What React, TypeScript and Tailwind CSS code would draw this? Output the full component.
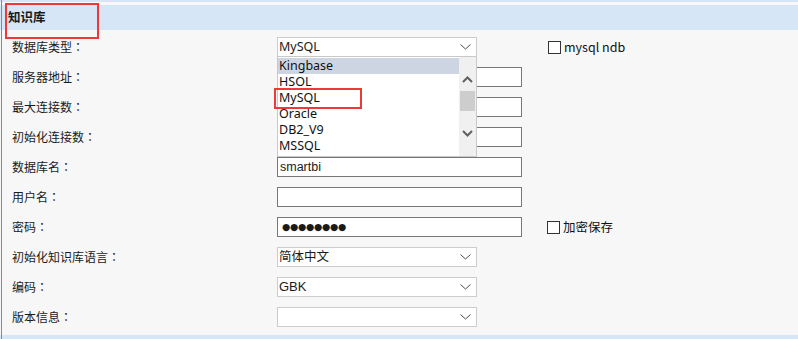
import React from 'react'

type Row = {
  label: string
  kind: 'select' | 'input'
  value?: string
  password?: boolean
  check?: string
}

const rows: Row[] = [
  { label: '数据库类型', kind: 'select', value: 'MySQL', check: 'mysql ndb' },
  { label: '服务器地址', kind: 'input' },
  { label: '最大连接数', kind: 'input' },
  { label: '初始化连接数', kind: 'input' },
  { label: '数据库名', kind: 'input', value: 'smartbi' },
  { label: '用户名', kind: 'input' },
  { label: '密码', kind: 'input', password: true, check: '加密保存' },
  { label: '初始化知识库语言', kind: 'select', value: '简体中文' },
  { label: '编码', kind: 'select', value: 'GBK' },
  { label: '版本信息', kind: 'select' },
]

const options = ['Kingbase', 'HSOL', 'MySQL', 'Oracle', 'DB2_V9', 'MSSQL']

const Chevron = () => (
  <svg width="11" height="6" viewBox="0 0 11 6" className="shrink-0">
    <path d="M0.5 0.5 L5.5 5 L10.5 0.5" fill="none" stroke="#4a4a4a" strokeWidth="1" />
  </svg>
)

const DropList = () => (
  <div className="absolute left-0 top-[19px] z-10 flex h-[101px] w-[200px] border border-[#c9c9c9] bg-white">
    <div className="flex-1 pt-px">
      {options.map((o, i) => (
        <div
          key={o}
          className={
            "h-4 pl-px text-[12.5px] leading-4 text-[#111] font-['Noto_Sans',sans-serif] " +
            (i === 0 ? 'bg-[#cdd5e3]' : '')
          }
        >
          {o}
        </div>
      ))}
    </div>
    <div className="flex w-[17px] flex-col items-center bg-[#f0f0f0]">
      <svg width="11" height="7" viewBox="0 0 11 7" className="mt-[19px]">
        <path d="M1 6 L5.5 1.5 L10 6" fill="none" stroke="#606060" strokeWidth="2" />
      </svg>
      <div className="mt-[8px] h-5 w-[15px] bg-[#cdcdcd]" />
      <svg width="11" height="7" viewBox="0 0 11 7" className="mt-[19px]">
        <path d="M1 1 L5.5 5.5 L10 1" fill="none" stroke="#606060" strokeWidth="2" />
      </svg>
    </div>
  </div>
)

const CheckBox = ({ text }: { text: string }) => (
  <div className="ml-[25px] flex items-center">
    <div className="h-[13px] w-[13px] border border-[#333] bg-white" />
    <span className="ml-[3px] text-[12.5px] text-[#111]">{text}</span>
  </div>
)

export default function App() {
  return (
    <div className="relative h-[339px] w-[798px] overflow-hidden bg-[#f7f7f7] font-['Noto_Sans_CJK_SC',sans-serif] text-[#1a1a1a]">
      <div className="absolute left-px top-0 h-full w-px bg-[#5f8fd4]" />
      <div className="h-[2px] bg-[#d6e6f6]" />
      <div className="h-[3px]" />
      <div className="flex h-[25px] items-center bg-[#d6e6f6] pl-2 text-[12.5px] font-bold">知识库</div>
      <div className="pt-[2px]">
        {rows.map((r, i) => (
          <div key={i} className="flex h-[30px] items-center">
            <div className="w-[277px] pl-3 text-[12px]">
              {r.label}
              <span className="font-['Noto_Sans_CJK_TC',sans-serif]">：</span>
            </div>
            {r.kind === 'select' ? (
              <div className="relative">
                <div className="flex h-5 w-[200px] items-center justify-between border border-[#cccccc] bg-white pl-px pr-[5px]">
                  <span
                    className={
                      r.value === 'GBK'
                        ? "text-[13px] font-['Liberation_Sans',sans-serif]"
                        : "text-[12.5px] font-['Noto_Sans','Noto_Sans_CJK_SC',sans-serif]"
                    }
                  >
                    {r.value ?? ''}
                  </span>
                  <Chevron />
                </div>
                {i === 0 && <DropList />}
              </div>
            ) : (
              <div className="flex h-5 w-[245px] items-center border border-[#777] bg-white pl-[2px] font-['Liberation_Sans',sans-serif] text-[12.5px]">
                {r.password ? (
                  <span className="pl-[2px] text-[9.5px] tracking-[-0.3px] font-['DejaVu_Sans',sans-serif]">●●●●●●●●</span>
                ) : (
                  r.value ?? ''
                )}
              </div>
            )}
            {r.check && <div className={r.kind === 'select' ? 'ml-[46px]' : ''}><CheckBox text={r.check} /></div>}
          </div>
        ))}
      </div>
      <div className="mt-[3px] h-2 bg-[#d6e6f6]" />
      <div className="absolute left-[5px] top-[3px] h-[36px] w-[94px] border-2 border-[#f03838]" />
      <div className="absolute left-[274px] top-[88px] z-20 h-[21px] w-[88px] border-2 border-[#f03838]" />
    </div>
  )
}
